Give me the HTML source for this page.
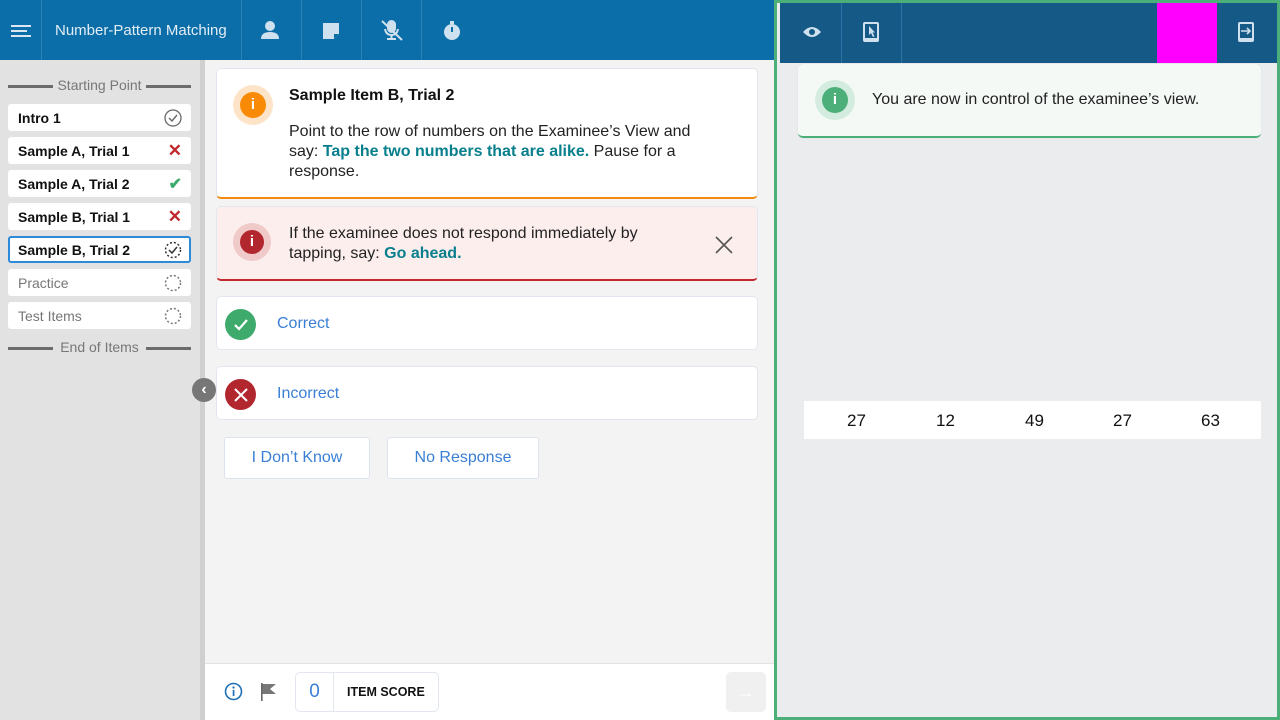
<!DOCTYPE html>
<html><head><meta charset="utf-8"><style>
*{box-sizing:border-box;margin:0;padding:0}
body{width:1280px;height:720px;overflow:hidden;font-family:"Liberation Sans",sans-serif;background:#f3f3f3;position:relative}
.abs{position:absolute}
.hdr{left:0;top:0;width:774px;height:60px;background:#0b6ea8}
.hsep{position:absolute;top:0;width:1px;height:60px;background:#2a82b5}
.side{left:0;top:60px;width:200px;height:660px;background:#e2e2e2}
.sbar{left:200px;top:60px;width:5px;height:660px;background:#cfcfcf}
.item{position:absolute;left:8px;width:183px;height:27px;background:#fff;border-radius:3px;font-size:14px;font-weight:bold;padding:6px 10px;color:#111}
.item.g{font-weight:normal;color:#777}
.lbl{position:absolute;left:8px;width:183px;font-size:14px;color:#777;text-align:center}
.lbl:before,.lbl:after{content:"";position:absolute;top:8px;width:45px;height:3px;background:#6c6c6c}
.lbl:before{left:0}.lbl:after{right:0}
.card{position:absolute;left:216px;width:542px;background:#fff;border:1px solid #e2e6ee;border-radius:5px}
.txt{font-size:16px;color:#222;line-height:20px}
.teal{color:#087f8c;font-weight:bold}
.btn{position:absolute;top:437px;height:42px;background:#fff;border:1px solid #dde3ee;border-radius:3px;color:#3a7fd5;font-size:16px;text-align:center;line-height:40px}
</style></head><body>
<div class="abs hdr">
 <div class="hsep" style="left:41px"></div><div class="hsep" style="left:241px"></div><div class="hsep" style="left:301px"></div><div class="hsep" style="left:361px"></div><div class="hsep" style="left:421px"></div>
 <svg class="abs" style="left:10px;top:24px" width="22" height="14"><g stroke="#dbe6f0" stroke-width="2"><line x1="1" y1="2" x2="21" y2="2"/><line x1="1" y1="7" x2="17" y2="7"/><line x1="1" y1="12" x2="21" y2="12"/></g></svg>
 <div class="abs" style="left:55px;top:22px;color:#e3edf6;font-size:15px">Number-Pattern Matching</div>
 <svg class="abs" style="left:260px;top:20px" width="20" height="20"><circle cx="10" cy="6" r="5" fill="#cfe0ee"/><path d="M1 19 Q1 12 10 12 Q19 12 19 19Z" fill="#cfe0ee"/></svg>
 <svg class="abs" style="left:322px;top:22px" width="18" height="18"><path d="M1 1H17V12L12 17H1Z" fill="#cfe0ee"/><path d="M12 17V12H17" fill="#0b6ea8"/></svg>
 <svg class="abs" style="left:380px;top:19px" width="24" height="22"><g stroke="#cfe0ee" stroke-width="2" fill="none"><rect x="8" y="2" width="7" height="11" rx="3.5" fill="#cfe0ee"/><path d="M5 10Q6 16 11.5 16Q17 16 18 10M11.5 16V20M7 20H16"/><line x1="2" y1="2" x2="22" y2="21"/></g></svg>
 <svg class="abs" style="left:442px;top:20px" width="22" height="22"><circle cx="10" cy="12" r="8" fill="#cfe0ee"/><rect x="8" y="1" width="4" height="3" fill="#cfe0ee"/><line x1="10" y1="7" x2="10" y2="12" stroke="#0b6ea8" stroke-width="2"/></svg>
</div>
<div class="abs side"></div><div class="abs sbar"></div>
<div class="lbl" style="top:77px">Starting Point</div>
<div class="item" style="top:104px">Intro 1<svg class="abs" style="right:9px;top:5px" width="18" height="18"><circle cx="9" cy="9" r="8" fill="none" stroke="#666" stroke-width="1.3"/><path d="M5 9L8 12L13 6" stroke="#666" stroke-width="1.4" fill="none"/></svg></div>
<div class="item" style="top:137px">Sample A, Trial 1<span class="abs" style="right:9px;top:4px;color:#c0282d;font-size:17px">✕</span></div>
<div class="item" style="top:170px">Sample A, Trial 2<span class="abs" style="right:9px;top:4px;color:#3eaa6c;font-size:16px">✔</span></div>
<div class="item" style="top:203px">Sample B, Trial 1<span class="abs" style="right:9px;top:4px;color:#c0282d;font-size:17px">✕</span></div>
<div class="item" style="top:236px;border:2px solid #2d8ad8;padding:4px 8px">Sample B, Trial 2<svg class="abs" style="right:7px;top:3px" width="18" height="18"><circle cx="9" cy="9" r="7.5" fill="none" stroke="#333" stroke-width="1.5" stroke-dasharray="2 2"/><path d="M5 9L8 12L13 6" stroke="#333" stroke-width="1.5" fill="none"/></svg></div>
<div class="item g" style="top:269px">Practice<svg class="abs" style="right:9px;top:5px" width="18" height="18"><circle cx="9" cy="9" r="7.5" fill="none" stroke="#777" stroke-width="1.5" stroke-dasharray="2 2"/></svg></div>
<div class="item g" style="top:302px">Test Items<svg class="abs" style="right:9px;top:5px" width="18" height="18"><circle cx="9" cy="9" r="7.5" fill="none" stroke="#777" stroke-width="1.5" stroke-dasharray="2 2"/></svg></div>
<div class="lbl" style="top:339px">End of Items</div>
<div class="abs" style="left:192px;top:378px;width:24px;height:24px;border-radius:50%;background:#777;color:#fff;font-size:16px;text-align:center;line-height:23px;font-weight:bold">‹</div>

<div class="card" style="top:68px;height:131px;border-bottom:2px solid #f28a10">
 <div class="abs" style="left:16px;top:16px;width:40px;height:40px;border-radius:50%;background:#fde3c8"></div>
 <div class="abs" style="left:23px;top:23px;width:26px;height:26px;border-radius:50%;background:#f98a05;color:#fff;font-weight:bold;text-align:center;line-height:26px;font-size:15px">i</div>
 <div class="abs" style="left:72px;top:18px;font-size:16px;font-weight:bold;color:#111">Sample Item B, Trial 2</div>
 <div class="abs txt" style="left:72px;top:53px;width:430px">Point to the row of numbers on the Examinee’s View and say: <span class="teal">Tap the two numbers that are alike.</span> Pause for a response.</div>
</div>
<div class="card" style="top:206px;height:75px;background:#fdeeee;border-bottom:2px solid #c0282d">
 <div class="abs" style="left:16px;top:16px;width:38px;height:38px;border-radius:50%;background:#f0c9c9"></div>
 <div class="abs" style="left:23px;top:23px;width:24px;height:24px;border-radius:50%;background:#b2272d;color:#fff;font-weight:bold;text-align:center;line-height:24px;font-size:15px">i</div>
 <div class="abs txt" style="left:72px;top:17px;width:385px">If the examinee does not respond immediately by tapping, say: <span class="teal">Go ahead.</span></div>
 <svg class="abs" style="left:497px;top:28px" width="20" height="20"><path d="M2 2L18 18M18 2L2 18" stroke="#555" stroke-width="1.6"/></svg>
</div>
<div class="card" style="top:296px;height:54px">
 <div class="abs" style="left:8px;top:12px;width:31px;height:31px;border-radius:50%;background:#3eaa6c"></div>
 <svg class="abs" style="left:16px;top:20px" width="16" height="16"><path d="M2 8L6 12L14 3" stroke="#fff" stroke-width="2.2" fill="none"/></svg>
 <div class="abs" style="left:60px;top:18px;color:#3a7fd5;font-size:16px">Correct</div>
</div>
<div class="card" style="top:366px;height:54px">
 <div class="abs" style="left:8px;top:12px;width:31px;height:31px;border-radius:50%;background:#b2272d"></div>
 <svg class="abs" style="left:16px;top:20px" width="16" height="16"><path d="M2 2L14 14M14 2L2 14" stroke="#fff" stroke-width="2"/></svg>
 <div class="abs" style="left:60px;top:18px;color:#3a7fd5;font-size:16px">Incorrect</div>
</div>
<div class="btn" style="left:224px;width:146px">I Don’t Know</div>
<div class="btn" style="left:387px;width:152px">No Response</div>

<div class="abs" style="left:205px;top:663px;width:569px;height:57px;background:#fff;border-top:1px solid #e2e2e2"></div>
<svg class="abs" style="left:224px;top:682px" width="19" height="19"><circle cx="9.5" cy="9.5" r="8" fill="none" stroke="#1f6fb5" stroke-width="1.6"/><rect x="8.7" y="8" width="1.7" height="6" fill="#1f6fb5"/><circle cx="9.5" cy="5.5" r="1.1" fill="#1f6fb5"/></svg>
<svg class="abs" style="left:260px;top:682px" width="18" height="20"><rect x="1" y="1" width="1.6" height="18" fill="#666"/><path d="M2.5 2H16L10 7L16 12H2.5Z" fill="#777"/></svg>
<div class="abs" style="left:295px;top:672px;width:144px;height:40px;border:1px solid #e2e6ee;border-radius:5px;background:#fff">
 <div class="abs" style="left:0;top:0;width:38px;height:38px;border-right:1px solid #e2e6ee;color:#3a7fd5;font-size:19px;text-align:center;line-height:38px">0</div>
 <div class="abs" style="left:51px;top:12px;font-size:12.5px;font-weight:bold;color:#111">ITEM SCORE</div>
</div>
<div class="abs" style="left:726px;top:672px;width:40px;height:40px;border-radius:5px;background:#f0f0f0;color:#fff;text-align:center;line-height:40px;font-size:18px">→</div>

<div class="abs" style="left:774px;top:0;width:506px;height:720px;border:3px solid #4caf7a;background:#eaecee"></div>
<div class="abs" style="left:780px;top:3px;width:497px;height:60px;background:#155a87"></div>
<div class="abs" style="left:841px;top:3px;width:1px;height:60px;background:#2a74a8"></div>
<div class="abs" style="left:901px;top:3px;width:1px;height:60px;background:#2a74a8"></div>
<div class="abs" style="left:1157px;top:3px;width:60px;height:60px;background:#ff00ff"></div>
<svg class="abs" style="left:802px;top:25px" width="20" height="14"><path d="M1 7Q10 -3 19 7Q10 17 1 7Z" fill="#cfe0ee"/><circle cx="10" cy="7" r="3" fill="#155a87"/></svg>
<svg class="abs" style="left:862px;top:21px" width="18" height="22"><rect x="1" y="1" width="16" height="20" rx="2" fill="#cfe0ee"/><rect x="3" y="3" width="12" height="14" fill="#155a87"/><path d="M7 5V14L9 12L11 16L12.5 15.3L10.5 11.5H13Z" fill="#cfe0ee"/></svg>
<svg class="abs" style="left:1237px;top:21px" width="18" height="22"><rect x="1" y="1" width="16" height="20" rx="2" fill="#cfe0ee"/><rect x="3" y="3" width="12" height="14" fill="#155a87"/><path d="M4 10H13M10 7L13 10L10 13" stroke="#cfe0ee" stroke-width="1.6" fill="none"/></svg>
<div class="abs" style="left:798px;top:64px;width:463px;height:74px;background:#f4f9f6;border-radius:5px;border-bottom:2px solid #4caf7a;box-shadow:0 0 1px #ccd">
 <div class="abs" style="left:17px;top:16px;width:40px;height:40px;border-radius:50%;background:#d3ecdf"></div>
 <div class="abs" style="left:24px;top:23px;width:26px;height:26px;border-radius:50%;background:#4caf7a;color:#fff;font-weight:bold;text-align:center;line-height:26px;font-size:15px">i</div>
 <div class="abs" style="left:74px;top:27px;font-size:16px;color:#222">You are now in control of the examinee’s view.</div>
</div>
<div class="abs" style="left:804px;top:401px;width:457px;height:38px;background:#fff;font-size:17px;color:#111">
 <span class="abs" style="left:43px;top:10px">27</span><span class="abs" style="left:132px;top:10px">12</span><span class="abs" style="left:221px;top:10px">49</span><span class="abs" style="left:309px;top:10px">27</span><span class="abs" style="left:397px;top:10px">63</span>
</div>
</body></html>
